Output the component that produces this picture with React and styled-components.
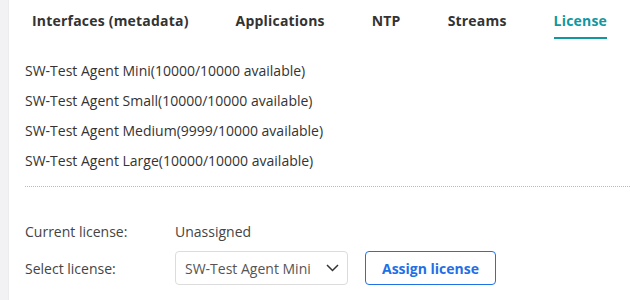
import styled, { createGlobalStyle } from 'styled-components'

const GlobalStyle = createGlobalStyle`
	body {
		margin: 0;
		background: #fff;
		font-family: 'Open Sans', 'Noto Sans', sans-serif;
	}
`

const tabs = ['Interfaces (metadata)', 'Applications', 'NTP', 'Streams', 'License']

const licenses = [
	{ name: 'Mini', used: 10000 },
	{ name: 'Small', used: 10000 },
	{ name: 'Medium', used: 9999 },
	{ name: 'Large', used: 10000 },
]

function Chevron() {
	return (
		<svg width="13" height="8" viewBox="0 0 13 8" fill="none">
			<path d="M1 1l5.5 5.5L12 1" stroke="#333" strokeWidth="1.5" />
		</svg>
	)
}

export default function App() {
	return (
		<>
			<GlobalStyle />
			<Page>
				<SideStrip />
				<Main>
					<TabBar>
						{tabs.map(t => (
							<Tab key={t} $active={t === 'License'}>
								{t}
							</Tab>
						))}
					</TabBar>

					<LicenseList>
						{licenses.map(l => (
							<LicenseItem key={l.name}>
								SW-Test Agent {l.name}({l.used}/10000 available)
							</LicenseItem>
						))}
					</LicenseList>

					<Divider />

					<FormRow>
						<Label>Current license:</Label>
						<Value>Unassigned</Value>
					</FormRow>
					<FormRow $tall>
						<Label>Select license:</Label>
						<Select>
							<SelectText>SW-Test Agent Mini</SelectText>
							<Chevron />
						</Select>
						<AssignButton>Assign license</AssignButton>
					</FormRow>
				</Main>
			</Page>
		</>
	)
}

const Page = styled.div`
	display: flex;
	height: 300px;
	overflow: hidden;
`

const SideStrip = styled.div`
	width: 8px;
	flex-shrink: 0;
	background: #f2f2f4;
	border-right: 1px solid #ececef;
`

const Main = styled.div`
	flex: 1;
	padding-left: 16px;
	display: flex;
	flex-direction: column;
`

const TabBar = styled.div`
	display: flex;
	gap: 47px;
	padding-left: 7px;
	height: 39px;
`

const Tab = styled.div`
	font-size: 14px;
	font-weight: 700;
	letter-spacing: 0.2px;
	line-height: 20px;
	padding-top: 11px;
	height: 26px;
	color: ${({ $active }) => ($active ? '#10979f' : '#333')};
	border-bottom: 2px solid ${({ $active }) => ($active ? '#10979f' : 'transparent')};
	white-space: nowrap;
`

const LicenseList = styled.ul`
	list-style: none;
	margin: 17px 0 0;
	padding: 0;
`

const LicenseItem = styled.li`
	font-size: 14px;
	line-height: 30px;
	color: #333;
	white-space: nowrap;
`

const Divider = styled.div`
	margin-top: 10px;
	border-top: 1px dotted #b9b9b9;
`

const FormRow = styled.div`
	display: flex;
	align-items: center;
	height: ${({ $tall }) => ($tall ? '34px' : '20px')};
	margin-top: ${({ $tall }) => ($tall ? '10px' : '34px')};
	font-size: 14px;
	color: #444;
`

const Label = styled.span`
	width: 150px;
	flex-shrink: 0;
`

const Value = styled.span`
	color: #444;
`

const Select = styled.div`
	box-sizing: border-box;
	width: 173px;
	height: 34px;
	display: flex;
	align-items: center;
	justify-content: space-between;
	padding: 0 8px 0 9px;
	border: 1px solid #dcdcdc;
	border-radius: 4px;
`

const SelectText = styled.span`
	color: #555;
	white-space: nowrap;
`

const AssignButton = styled.button`
	box-sizing: border-box;
	margin-left: 17px;
	width: 131px;
	height: 34px;
	background: #fff;
	border: 1px solid #1f72e6;
	border-radius: 4px;
	color: #1f6fe5;
	font-family: inherit;
	font-size: 14px;
	font-weight: 700;
	padding: 0;
`
